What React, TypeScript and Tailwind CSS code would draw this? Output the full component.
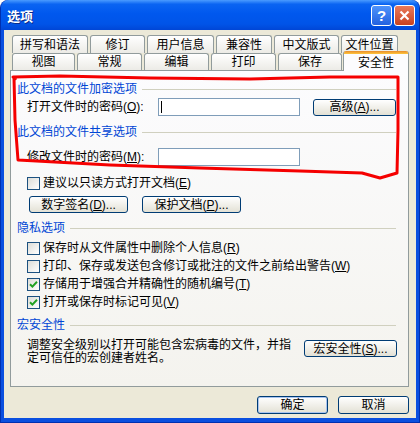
import React from "react";

const font = "font-['Liberation_Sans','Noto_Sans_CJK_SC',sans-serif]";

function Check({ checked }: { checked?: boolean }) {
  return (
    <span className="w-[13px] h-[13px] shrink-0 border border-[#1c5180] bg-linear-to-br from-[#dcdcd7] to-white flex items-center justify-center">
      {checked && (
        <svg width="9" height="9" viewBox="0 0 9 9">
          <path d="M1 4.2 L3.4 6.6 L8 1.8" stroke="#21a121" strokeWidth="2" fill="none" />
        </svg>
      )}
    </span>
  );
}

function Btn({ w, children, focus }: { w: string; children: React.ReactNode; focus?: boolean }) {
  return (
    <button
      className={`${w} h-[17px] shrink-0 border border-[#003c74] rounded-[3px] bg-linear-to-b from-white to-[#e3e1d5] text-[12px] leading-none text-black flex items-center justify-center ${
        focus ? "shadow-[inset_0_0_0_1px_#a8c4f0]" : ""
      }`}
    >
      {children}
    </button>
  );
}

function Group({ title }: { title: string }) {
  return (
    <div className="h-[14px] flex items-center pr-[12px]">
      <span className="text-[#0046d5] text-[12px] leading-none whitespace-nowrap">{title}</span>
      <span className="flex-1 h-px bg-[#d0d0bf] ml-[5px]" />
    </div>
  );
}

function CheckRow({ label, k, checked }: { label: string; k: string; checked?: boolean }) {
  return (
    <div className="h-[18px] flex items-center ml-[10px] gap-[3px]">
      <Check checked={checked} />
      <span className="text-[12px] leading-none whitespace-nowrap">
        {label}(<u>{k}</u>)
      </span>
    </div>
  );
}

const row1 = [
  { t: "拼写和语法", c: "w-[76px]" },
  { t: "修订", c: "w-[55px]" },
  { t: "用户信息", c: "w-[67px]" },
  { t: "兼容性", c: "w-[56px]" },
  { t: "中文版式", c: "w-[65px]" },
  { t: "文件位置", c: "w-[57px]" },
];

const row2 = [
  { t: "视图", c: "w-[63px]" },
  { t: "常规", c: "w-[65px]" },
  { t: "编辑", c: "w-[65px]" },
  { t: "打印", c: "w-[65px]" },
  { t: "保存", c: "w-[64px]" },
];

const tabCls =
  "h-full border border-b-0 border-[#919b9c] rounded-t-[3px] bg-linear-to-b from-white to-[#ecebe6] flex items-center justify-center text-[12px] leading-none text-black";

export default function App() {
  return (
    <div className={`w-[420px] h-[423px] bg-white relative overflow-hidden ${font}`}>
      <div className="w-full h-full rounded-t-[8px] bg-[#0a4fdf] border border-t-0 border-[#0030b0] flex flex-col">
        {/* title bar */}
        <div className="h-[30px] shrink-0 rounded-t-[8px] bg-[linear-gradient(to_bottom,#4a9bff_0%,#0a64f2_14%,#0058ee_45%,#0054e8_80%,#0046d6_100%)] flex items-center pl-[6px] pr-[4px]">
          <span className="text-white font-bold text-[13px] leading-none [text-shadow:1px_1px_0_#0a2a8a] font-['Noto_Sans_CJK_SC',sans-serif]">
            选项
          </span>
          <div className="ml-auto flex gap-[2px]">
            <div className="w-[21px] h-[21px] rounded-[3px] border border-white bg-linear-to-b from-[#4f93fb] to-[#2361e0] flex items-center justify-center text-white font-bold text-[15px] leading-none">
              ?
            </div>
            <div className="w-[21px] h-[21px] rounded-[3px] border border-white bg-linear-to-b from-[#e9795a] to-[#c8411e] flex items-center justify-center">
              <svg width="11" height="11" viewBox="0 0 11 11">
                <path d="M1.5 1.5 L9.5 9.5 M9.5 1.5 L1.5 9.5" stroke="white" strokeWidth="2.2" />
              </svg>
            </div>
          </div>
        </div>

        {/* body */}
        <div className="flex-1 mx-[3px] mb-[4px] bg-[#ece9d8] flex flex-col pl-[6px]">
          {/* tabs */}
          <div className="mt-[5px] h-[18px] flex gap-[2px] pl-[2px]">
            {row1.map((r) => (
              <div key={r.t} className={`${r.c} ${tabCls}`}>
                {r.t}
              </div>
            ))}
          </div>
          <div className="h-[17px] flex items-end gap-[2px] pl-[2px]">
            {row2.map((r) => (
              <div key={r.t} className={`${r.c} ${tabCls}`}>
                {r.t}
              </div>
            ))}
            <div className="relative top-[1px] z-10 -ml-[1px] w-[66px] h-[20px] border-x border-[#919b9c] rounded-t-[3px] bg-[#fcfcfe] flex flex-col">
              <div className="h-[3px] rounded-t-[2px] bg-linear-to-b from-[#e68b2c] to-[#ffc73c]" />
              <div className="flex-1 flex items-center justify-center text-[12px] leading-none text-black">安全性</div>
            </div>
          </div>

          {/* panel */}
          <div className="w-[399px] h-[317px] border border-[#919b9c] bg-linear-to-b from-[#fcfcfe] to-[#f4f3ee] flex flex-col pl-[6px] pt-[11px] text-[12px] text-black">
            <Group title="此文档的文件加密选项" />
            <div className="mt-[2px] h-[18px] flex items-center">
              <span className="ml-[10px] w-[131px] leading-none whitespace-nowrap">
                打开文件时的密码(<u>O</u>):
              </span>
              <div className="w-[142px] h-[18px] border border-[#7f9db9] bg-white flex items-center pl-[2px]">
                <span className="w-px h-[12px] bg-black" />
              </div>
              <div className="ml-[13px]">
                <Btn w="w-[83px]">
                  高级(<u>A</u>)...
                </Btn>
              </div>
            </div>
            <div className="mt-[9px]">
              <Group title="此文档的文件共享选项" />
            </div>
            <div className="mt-[9px] h-[18px] flex items-center">
              <span className="ml-[10px] w-[131px] leading-none whitespace-nowrap">
                修改文件时的密码(<u>M</u>):
              </span>
              <div className="w-[142px] h-[18px] border border-[#7f9db9] bg-white" />
            </div>
            <div className="mt-[9px] h-[16px] flex items-center ml-[10px] gap-[3px]">
              <Check />
              <span className="leading-none whitespace-nowrap">
                建议以只读方式打开文档(<u>E</u>)
              </span>
            </div>
            <div className="mt-[5px] flex ml-[12px] gap-[14px]">
              <Btn w="w-[99px]">
                数字签名(<u>D</u>)...
              </Btn>
              <Btn w="w-[99px]">
                保护文档(<u>P</u>)...
              </Btn>
            </div>
            <div className="mt-[8px]">
              <Group title="隐私选项" />
            </div>
            <div className="mt-[4px] flex flex-col">
              <CheckRow label="保存时从文件属性中删除个人信息" k="R" />
              <CheckRow label="打印、保存或发送包含修订或批注的文件之前给出警告" k="W" />
              <CheckRow label="存储用于增强合并精确性的随机编号" k="T" checked />
              <CheckRow label="打开或保存时标记可见" k="V" checked />
            </div>
            <div className="mt-[7px]">
              <Group title="宏安全性" />
            </div>
            <div className="mt-[7px] flex items-start">
              <p className="ml-[10px] w-[277px] leading-[13px] whitespace-nowrap">
                调整安全级别以打开可能包含宏病毒的文件，并指
                <br />
                定可信任的宏创建者姓名。
              </p>
              <div className="mt-[1px]">
                <Btn w="w-[93px]">
                  宏安全性(<u>S</u>)...
                </Btn>
              </div>
            </div>
          </div>

          {/* bottom buttons */}
          <div className="mt-[9px] flex justify-end gap-[10px] w-[399px]">
            <button className="w-[71px] h-[18px] border border-[#003c74] rounded-[3px] bg-linear-to-b from-white to-[#e3e1d5] shadow-[inset_0_0_0_1px_#a8c4f0] text-[12px] leading-none">
              确定
            </button>
            <button className="w-[71px] h-[18px] border border-[#003c74] rounded-[3px] bg-linear-to-b from-white to-[#e3e1d5] text-[12px] leading-none">
              取消
            </button>
          </div>
        </div>
      </div>

      {/* red hand-drawn annotation */}
      <svg className="absolute inset-0 pointer-events-none z-20" width="420" height="423" viewBox="0 0 420 423">
        <path
          d="M16 80 L13 77 L60 76 L150 78 L250 79 L330 77 L398 77 L398 130 L397 173 L380 178 L362 173 L300 171 L200 168 L110 165 L18 160 L15 120 L14 78"
          stroke="#f50000"
          strokeWidth="3"
          fill="none"
          strokeLinejoin="round"
        />
      </svg>
    </div>
  );
}
